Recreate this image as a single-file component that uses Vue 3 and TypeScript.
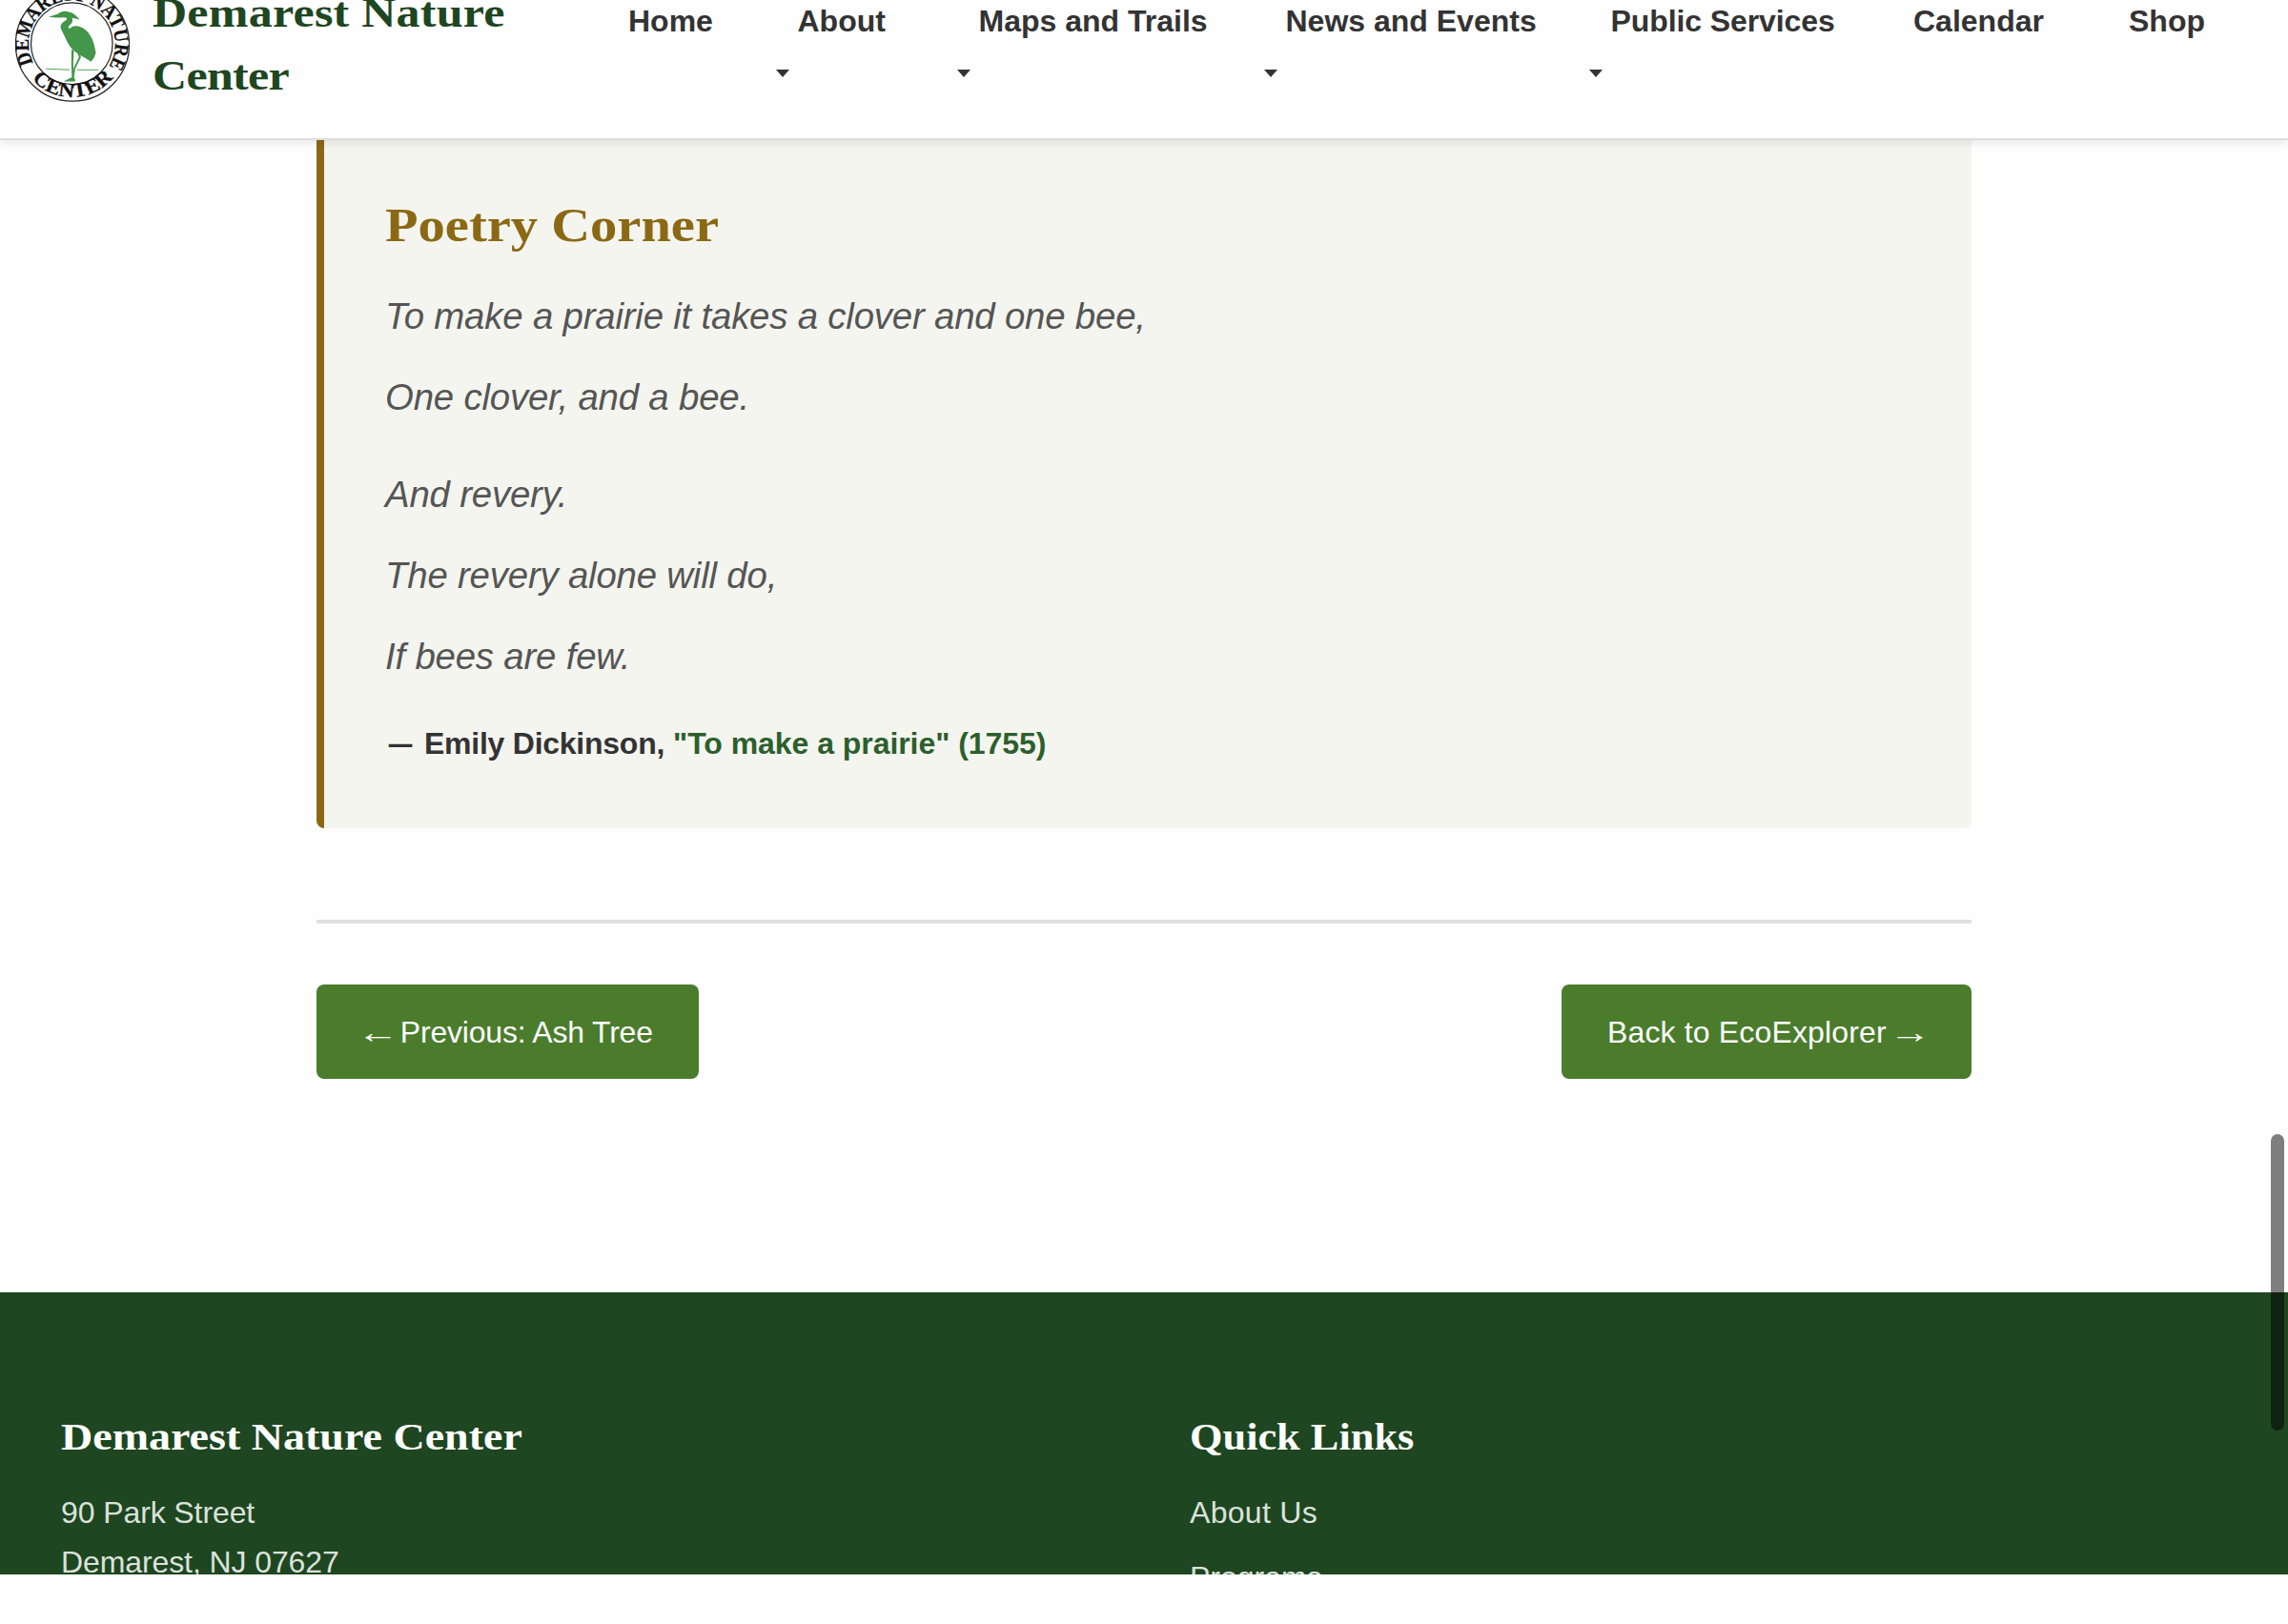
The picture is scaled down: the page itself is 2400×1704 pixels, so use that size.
<script setup lang="ts">
interface NavItem {
  label: string
  menu: boolean
}

const navItems: NavItem[] = [
  { label: 'Home', menu: false },
  { label: 'About', menu: true },
  { label: 'Maps and Trails', menu: true },
  { label: 'News and Events', menu: true },
  { label: 'Public Services', menu: true },
  { label: 'Calendar', menu: false },
  { label: 'Shop', menu: false },
]

const stanzas: string[][] = [
  ['To make a prairie it takes a clover and one bee,', 'One clover, and a bee.'],
  ['And revery.', 'The revery alone will do,', 'If bees are few.'],
]
</script>

<template>
  <div class="page">
    <header class="site-header">
      <a class="brand">
        <svg class="logo" viewBox="0 0 120 120" width="120" height="120">
          <defs>
            <path id="ring-top" d="M19.2 79.5 A45.3 45.3 0 1 1 99.8 79.5" />
            <path id="ring-bottom" d="M12 89 A56.6 56.6 0 0 0 107 89" />
          </defs>
          <circle cx="60" cy="59.6" r="59.6" fill="#fefefe" stroke="#222" stroke-width="1.2" />
          <circle cx="59.3" cy="58.7" r="42.8" fill="none" stroke="#222" stroke-width="1.2" />
          <text class="ring-text"><textPath href="#ring-top" textLength="188" lengthAdjust="spacingAndGlyphs" startOffset="0.5">DEMAREST NATURE</textPath></text>
          <text class="ring-text"><textPath href="#ring-bottom" textLength="96" lengthAdjust="spacingAndGlyphs" startOffset="9.5">CENTER</textPath></text>
          <g fill="#43964a">
            <path d="M35 30.800 L45 27.600 C48 24.800 52 24 56 25.600 C60 26.200 64 29 67.600 33.600 L62 32.200 L59.500 31.700 C61 34.500 59.500 37.500 57 39.500 C54.800 41.500 55.600 42.800 58 42.800 C60 39.800 65 39.800 69 41.500 C76 44.500 81 52 83 61 L84.600 68.500 L82.600 73.800 L79.500 77.800 L76 75.500 C71 72.500 66 70 62 66.500 C57 62.500 54.500 57 51.800 51 C50.500 48 48 44.500 47.500 41.500 C47.500 37 52 35.500 54 33.500 C55 31.500 52 30.800 48.500 31.500 L43 31.500 Z" />
            <path d="M59 65 L58.800 79 L59.400 94 L52 97.800 L51 98.400 L63 98.400 L62.500 96 L61.500 94 L60.800 79 L61.500 66 Z" />
            <path d="M66.500 68 L69 73 L63 85 L61.500 95 L60 95 L61.500 84 L66.800 73 L65 68 Z" />
          </g>
          <path d="M32 85.200 L57 86.200 M65 86.300 L87 86.300 M55 97.600 L63 96.800" stroke="#43964a" stroke-width="0.9" fill="none" />
        </svg>
        <span class="brand-name serif">Demarest Nature<br /><span class="brand-second">Center</span></span>
      </a>
      <nav class="nav">
        <a v-for="item in navItems" :key="item.label" class="nav-item" :class="{ menu: item.menu }">
          <span class="nav-label">{{ item.label }}</span>
          <span v-if="item.menu" class="caret"></span>
        </a>
      </nav>
    </header>

    <main class="content">
      <section class="poetry">
        <h2 class="poetry-title serif">Poetry Corner</h2>
        <div v-for="(stanza, i) in stanzas" :key="i" class="stanza">
          <p v-for="line in stanza" :key="line" class="line">{{ line }}</p>
        </div>
        <p class="credit">
          <span class="dash">—</span>
          <span class="author">Emily Dickinson,</span>
          <a class="source">"To make a prairie" (1755)</a>
        </p>
      </section>
      <div class="pager">
        <a class="button prev"><span class="arrow">←</span><span class="button-text">Previous: Ash Tree</span></a>
        <a class="button next"><span class="button-text">Back to EcoExplorer</span><span class="arrow">→</span></a>
      </div>
    </main>

    <footer class="footer">
      <div class="footer-col">
        <h3 class="footer-title serif">Demarest Nature Center</h3>
        <p class="address">90 Park Street<br />Demarest, NJ 07627</p>
      </div>
      <div class="footer-col">
        <h3 class="footer-title links-title serif">Quick Links</h3>
        <ul class="links">
          <li>About Us</li>
          <li>Programs</li>
        </ul>
      </div>
    </footer>
    <div class="scroll-thumb"></div>
  </div>
</template>

<style>
body {
  background: #fefefe;
}
</style>

<style scoped>
.page {
  position: relative;
  width: 2400px;
  height: 1704px;
  overflow: hidden;
  background: #fefefe;
  color: #333;
  font-family: 'Liberation Sans', Arial, sans-serif;
  font-size: 32px;
  line-height: 51.2px;
}
.serif {
  font-family: 'Liberation Serif', Georgia, serif;
  font-weight: 700;
  transform-origin: 0 0;
}
.site-header {
  position: relative;
  z-index: 1;
  box-sizing: border-box;
  display: flex;
  height: 147px;
  padding-left: 16px;
  background: #fefefe;
  border-bottom: 2px solid #ddd;
  box-shadow: 0 4px 8px rgba(0, 0, 0, 0.08);
}
.brand {
  display: flex;
  align-items: flex-start;
  gap: 24px;
  width: 643px;
  flex: none;
}
.logo {
  margin-top: -13px;
  flex: none;
}
.ring-text {
  font-family: 'Liberation Serif', serif;
  font-weight: 700;
  font-size: 21px;
  fill: #111;
  stroke: #111;
  stroke-width: 0.3px;
}
.brand-name {
  margin-top: -20.500px;
  font-size: 43.7px;
  line-height: 66.6px;
  letter-spacing: 0.2px;
  color: #1e4620;
  white-space: nowrap;
  transform: scaleX(1.145);
}
.brand-second {
  letter-spacing: -0.6px;
}
.nav {
  display: grid;
  grid-template-columns: 155px 190px 322px 341px 340px 226px 120px;
  margin-top: -3px;
  font-weight: 700;
}
.nav-item {
  display: flex;
  flex-direction: column;
  white-space: nowrap;
}
.menu .nav-label {
  padding-left: 22.500px;
}
.nav-item:nth-child(5) .nav-label {
  letter-spacing: -0.1px;
}
.caret {
  width: 0;
  height: 0;
  margin-top: 25px;
  border: 7.500px solid transparent;
  border-top: 8px solid #333;
  border-bottom: 0;
}
.content {
  width: 1736px;
  margin: 0 auto;
}
.poetry {
  box-sizing: border-box;
  height: 722px;
  padding: 46px 64px 0;
  background: #f4f5ef;
  border-left: 8px solid #8b6914;
  border-radius: 0 0 8px 8px;
}
.poetry-title {
  margin: 0 0 10px;
  font-size: 50.4px;
  line-height: 86px;
  color: #8b6914;
  transform: scaleX(1.122);
}
.stanza {
  margin-bottom: 16px;
}
.line {
  margin: 0;
  font-size: 38.4px;
  font-style: italic;
  line-height: 85.3px;
  letter-spacing: -0.2px;
  color: #555;
}
.credit {
  display: flex;
  gap: 9px;
  margin: 24px 0 0;
  font-weight: 700;
}
.dash {
  transform: scaleX(0.77);
}
.author {
  letter-spacing: -0.25px;
}
.source {
  letter-spacing: -0.05px;
  color: #2c5f2d;
}
.pager {
  display: flex;
  justify-content: space-between;
  margin-top: 96px;
  padding-top: 64px;
  border-top: 4px solid #e0e0e0;
}
.button {
  box-sizing: border-box;
  display: flex;
  gap: 8px;
  height: 99px;
  padding: 25px 48px 23px;
  background: #4a7c2c;
  border-radius: 8px;
  color: #fff;
  white-space: nowrap;
}
.arrow {
  font-family: 'Liberation Serif', serif;
  transform: scaleX(1.38);
}
.prev {
  width: 401px;
  letter-spacing: -0.2px;
}
.next {
  width: 430px;
  letter-spacing: 0.15px;
}
.footer {
  box-sizing: border-box;
  display: grid;
  grid-template-columns: 1184px 1fr;
  height: 296px;
  margin-top: 224px;
  padding: 121px 64px 0;
  overflow: hidden;
  background: #1e4620;
  color: #dbe2dc;
}
.footer-title {
  margin: 0 0 24px;
  font-size: 40.3px;
  line-height: 61.4px;
  color: #fff;
  white-space: nowrap;
  transform: scaleX(1.142);
}
.links-title {
  transform: scaleX(1.1);
}
.address {
  margin: 0;
  letter-spacing: -0.1px;
}
.links {
  margin: 0;
  padding: 0;
  list-style: none;
}
.links li {
  margin-bottom: 16px;
}
.links li:first-child {
  letter-spacing: 0.3px;
}
.scroll-thumb {
  position: absolute;
  z-index: 2;
  top: 1190px;
  right: 4px;
  width: 14px;
  height: 311px;
  border-radius: 7px;
  background: rgba(0, 0, 0, 0.5);
}
</style>
